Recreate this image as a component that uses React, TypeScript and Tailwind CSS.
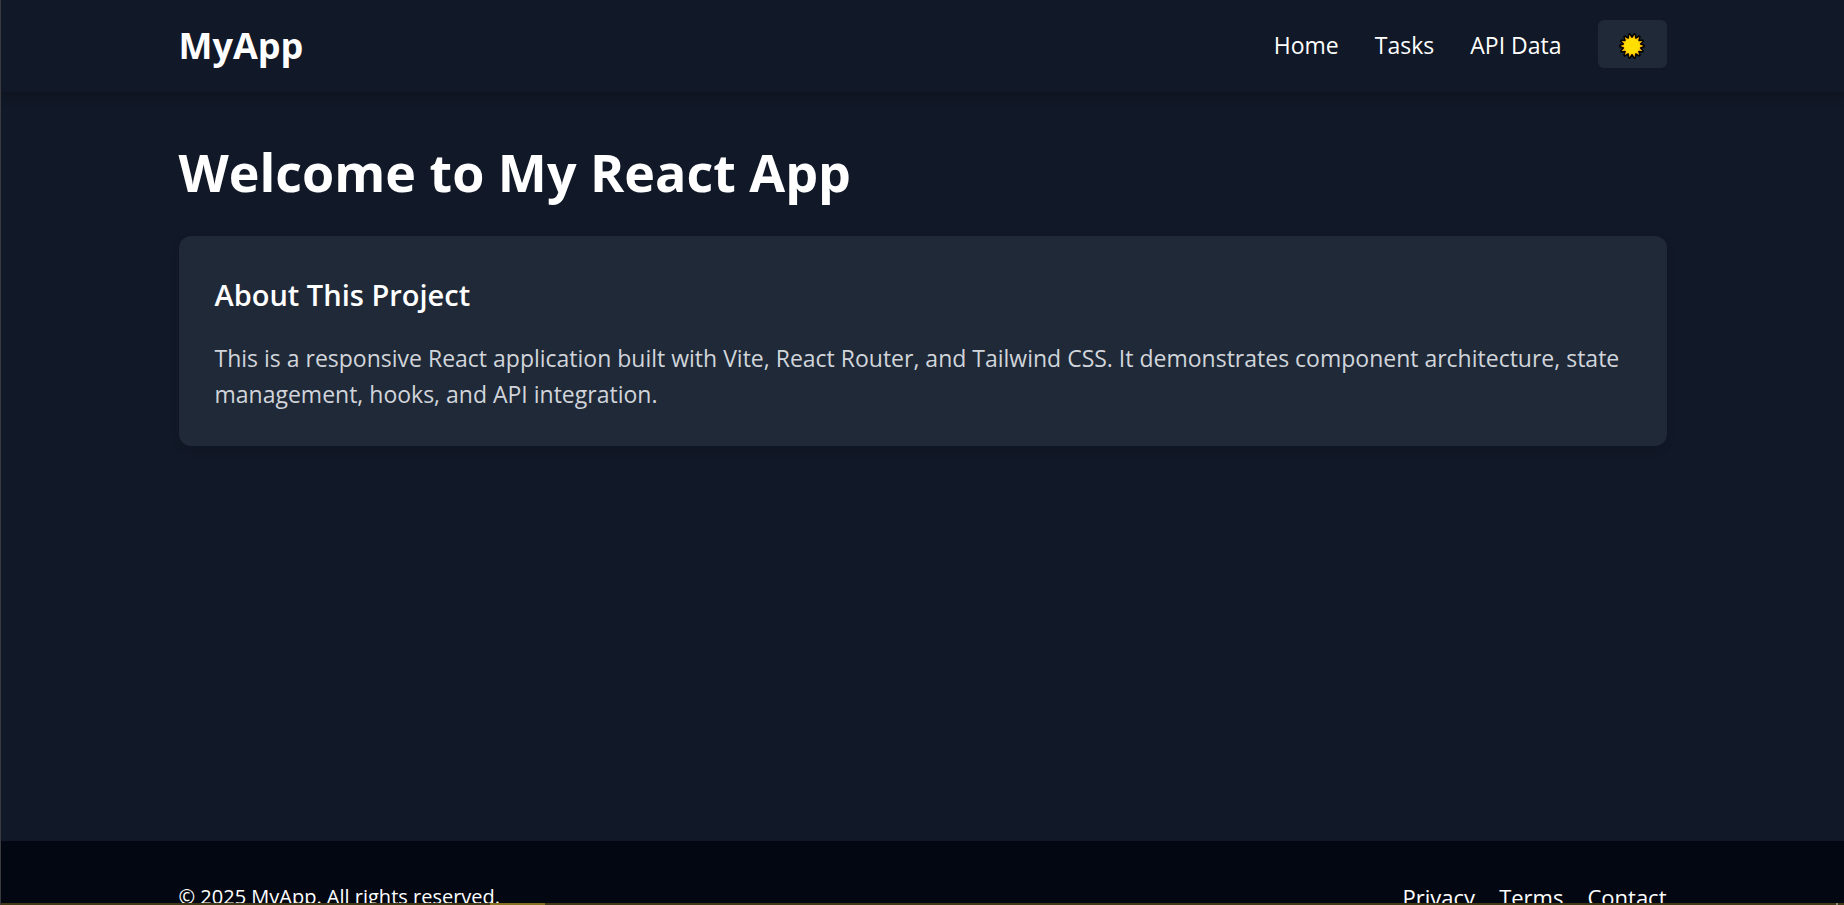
const navLinks = ["Home", "Tasks", "API Data"];
const footerLinks = ["Privacy", "Terms", "Contact"];

function starPoints(count: number, outer: number, inner: number) {
  return Array.from({ length: count * 2 }, (_, i) => {
    const r = i % 2 === 0 ? outer : inner;
    const a = ((i + 1) * Math.PI) / count;
    return `${(14 + r * Math.sin(a)).toFixed(2)},${(14 - r * Math.cos(a)).toFixed(2)}`;
  }).join(" ");
}

function SunIcon() {
  const points = starPoints(14, 11.6, 7.6);
  return (
    <svg viewBox="0 0 28 28" className="size-7" aria-hidden="true">
      <polygon points={points} fill="#000" stroke="#000" strokeWidth="3" strokeLinejoin="round" />
      <polygon points={points} fill="#ffb900" />
      <circle cx="14" cy="14" r="8" fill="#ffde00" />
    </svg>
  );
}

export default function App() {
  return (
    <div className="flex h-screen flex-col overflow-hidden border-l border-[#3a3a3f] bg-[#111827] font-['Open_Sans','Noto_Sans',sans-serif] text-white">
      <header className="shadow-[0_6px_9px_rgba(0,0,0,0.15)]">
        <div className="mx-auto flex w-full max-w-[1536px] items-center justify-between px-6 pt-5 pb-6">
          <a href="#" className="pt-1 text-4xl font-bold">MyApp</a>
          <nav className="flex items-center gap-9 text-[23px] leading-9">
            {navLinks.map((label) => (
              <a key={label} href="#" className="pt-0.5">{label}</a>
            ))}
            <button type="button" aria-label="Toggle theme" className="flex h-12 w-[69px] items-center justify-center rounded-md bg-[#1f2937] pt-1">
              <SunIcon />
            </button>
          </nav>
        </div>
      </header>
      <main className="mx-auto w-full max-w-[1536px] flex-1 px-6 pt-[50px] pb-12">
        <h1 className="mb-[34px] text-[52px] leading-[60px] font-bold">Welcome to My React App</h1>
        <section className="rounded-xl bg-[#1f2937] px-9 pt-[38px] pb-[34px] shadow-[0_4px_9px_rgba(0,0,0,0.1)]">
          <h2 className="mb-6 text-[29px] leading-[42px] font-semibold">About This Project</h2>
          <p className="text-[23px] leading-9 text-[#d1d5db]">
            This is a responsive React application built with Vite, React Router, and Tailwind CSS. It demonstrates component architecture, state management, hooks, and API integration.
          </p>
        </section>
      </main>
      <footer className="h-[62px] shrink-0 overflow-hidden bg-[#030712]">
        <div className="mx-auto flex w-full max-w-[1536px] items-center justify-between px-6 pt-[38px] pb-9 leading-9">
          <p className="text-xl leading-9">© 2025 MyApp. All rights reserved.</p>
          <nav className="flex gap-6 text-[22px]">
            {footerLinks.map((label) => (
              <a key={label} href="#">{label}</a>
            ))}
          </nav>
        </div>
      </footer>
      <div className="flex h-0.5 shrink-0 justify-between bg-[#403817] pr-1.5">
        <div className="ml-[489px] w-[55px] bg-[#857020]" />
        <div className="w-0.5 bg-[#8f8b7c]" />
      </div>
    </div>
  );
}
